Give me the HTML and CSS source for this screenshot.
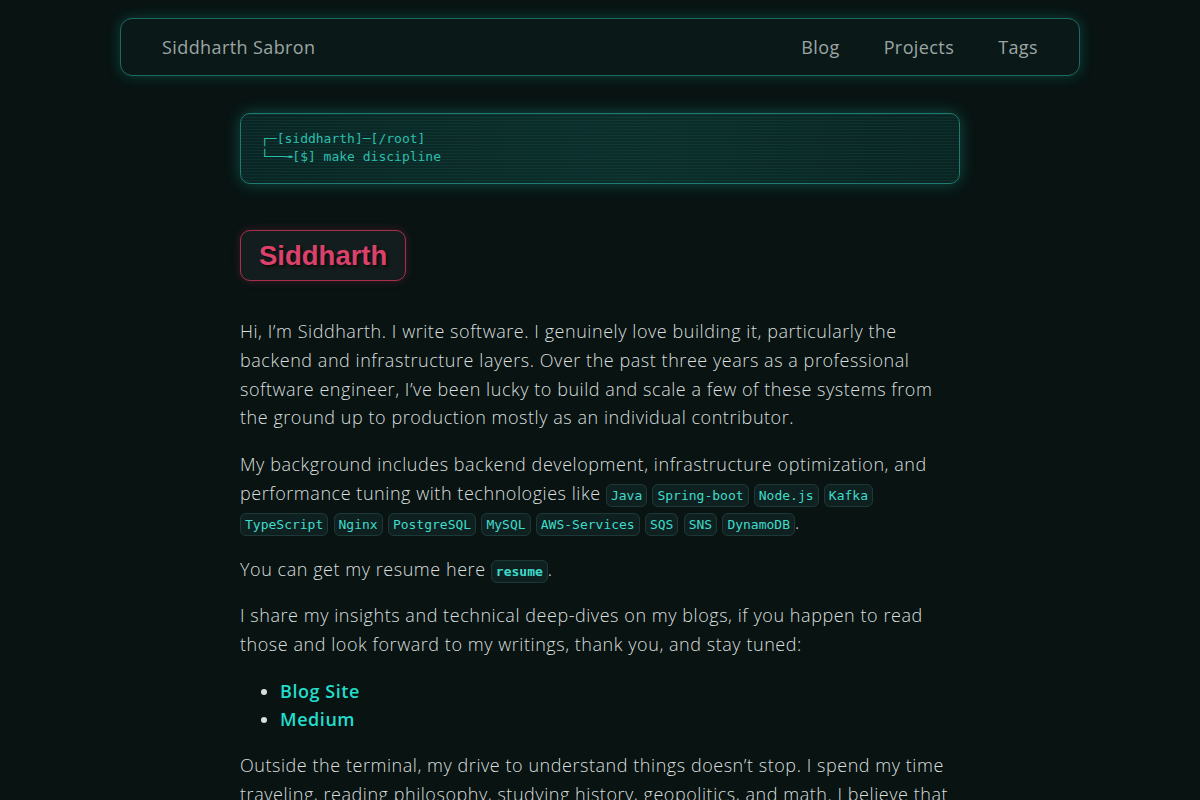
FILE: index.html
```html
<!DOCTYPE html>
<html lang="en">
<head>
    <meta charset="UTF-8">
    <meta content="width=device-width, initial-scale=1.0" name="viewport">
    <title>Siddharth Sabron</title>
    <link rel="stylesheet" href="styles.css">
</head>
<body>
<header class="site-header">
    <nav class="navbar">
        <a class="brand" href="#">Siddharth Sabron</a>
        <div class="nav-links">
            <a href="#">Blog</a>
            <a href="#">Projects</a>
            <a href="#">Tags</a>
        </div>
    </nav>
</header>

<main class="content">
    <div class="terminal">
        <pre>┌─[siddharth]─[/root]
└──╼[$] make discipline</pre>
    </div>

    <h1 class="name-badge">Siddharth</h1>

    <p>Hi, I’m Siddharth. I write software. I genuinely love building it, particularly the backend and infrastructure layers. Over the past three years as a professional software engineer, I’ve been lucky to build and scale a few of these systems from the ground up to production mostly as an individual contributor.</p>

    <p>My background includes backend development, infrastructure optimization, and performance tuning with technologies like <code>Java</code> <code>Spring-boot</code> <code>Node.js</code> <code>Kafka</code> <code>TypeScript</code> <code>Nginx</code> <code>PostgreSQL</code> <code>MySQL</code> <code>AWS-Services</code> <code>SQS</code> <code>SNS</code> <code>DynamoDB</code>.</p>

    <p>You can get my resume here <a class="code-link" href="#"><code>resume</code></a>.</p>

    <p>I share my insights and technical deep-dives on my blogs, if you happen to read those and look forward to my writings, thank you, and stay tuned:</p>

    <ul class="links">
        <li><a href="#">Blog Site</a></li>
        <li><a href="#">Medium</a></li>
    </ul>

    <p>Outside the terminal, my drive to understand things doesn’t stop. I spend my time traveling, reading philosophy, studying history, geopolitics, and math. I believe that curiosity is the best teacher and keeps me going.</p>
</main>
</body>
</html>
```

FILE: styles.css
```css
body {
    margin: 0;
    background-color: #081312;
    color: #dadfde;
    font-family: "Open Sans", "Noto Sans", sans-serif;
    font-weight: 300;
    font-size: 18px;
    line-height: 1.6;
    letter-spacing: 0.55px;
}
a {
    text-decoration: none;
}

/* top navigation */
.site-header {
    padding: 18px 0 0;
}
.navbar {
    max-width: 960px;
    height: 58px;
    margin: 0 auto;
    padding: 0 41px;
    box-sizing: border-box;
    display: flex;
    align-items: center;
    justify-content: space-between;
    background-color: #0b1818;
    border: 1px solid #1d6a62;
    border-radius: 12px;
    box-shadow: 0 0 14px rgba(32, 190, 170, 0.28);
}
.brand, .nav-links a {
    color: #9ba6a4;
    font-weight: 400;
    font-size: 18px;
    letter-spacing: 0.4px;
}
.nav-links {
    display: flex;
    gap: 44px;
}

.content {
    max-width: 720px;
    margin: 0 auto;
    padding-top: 37px;
}

/* terminal prompt banner */
.terminal {
    height: 71px;
    box-sizing: border-box;
    padding: 16px 20px;
    border: 1px solid #1f7a70;
    border-radius: 10px;
    background:
        repeating-linear-gradient(to bottom, rgba(40, 170, 155, 0.09) 0 1px, transparent 1px 3px),
        linear-gradient(90deg, #0a2523 0%, #0c2e2b 55%, #0a2422 100%);
    box-shadow: 0 0 16px rgba(32, 200, 180, 0.32);
}
.terminal pre {
    margin: 0;
    font-family: "DejaVu Sans Mono", monospace;
    font-size: 13px;
    line-height: 18px;
    letter-spacing: 0;
    color: #2cbfae;
}

/* highlighted name */
.name-badge {
    display: inline-block;
    margin: 46px 0 36px;
    padding: 8px 18px;
    font-family: "Liberation Sans", Arial, sans-serif;
    font-size: 27.5px;
    font-weight: 700;
    line-height: 33px;
    letter-spacing: 0;
    color: #dc416b;
    background-color: #141d1d;
    border: 1px solid #a8304f;
    border-radius: 10px;
    text-shadow: 2px 2px 3px rgba(0, 0, 0, 0.6);
    box-shadow: 0 0 10px rgba(220, 50, 100, 0.25);
}

p {
    margin: 0 0 18px;
}

code {
    font-family: "DejaVu Sans Mono", monospace;
    font-size: 13px;
    letter-spacing: 0;
    color: #3fdccb;
    background-color: #0e2020;
    border: 1px solid #1d3836;
    border-radius: 6px;
    padding: 3px 4px;
}
.code-link code {
    font-weight: 700;
}

.links {
    margin: 0 0 18px;
    padding-left: 40px;
    line-height: 28px;
}
.links a {
    color: #22ddcc;
    font-weight: 600;
}
```
